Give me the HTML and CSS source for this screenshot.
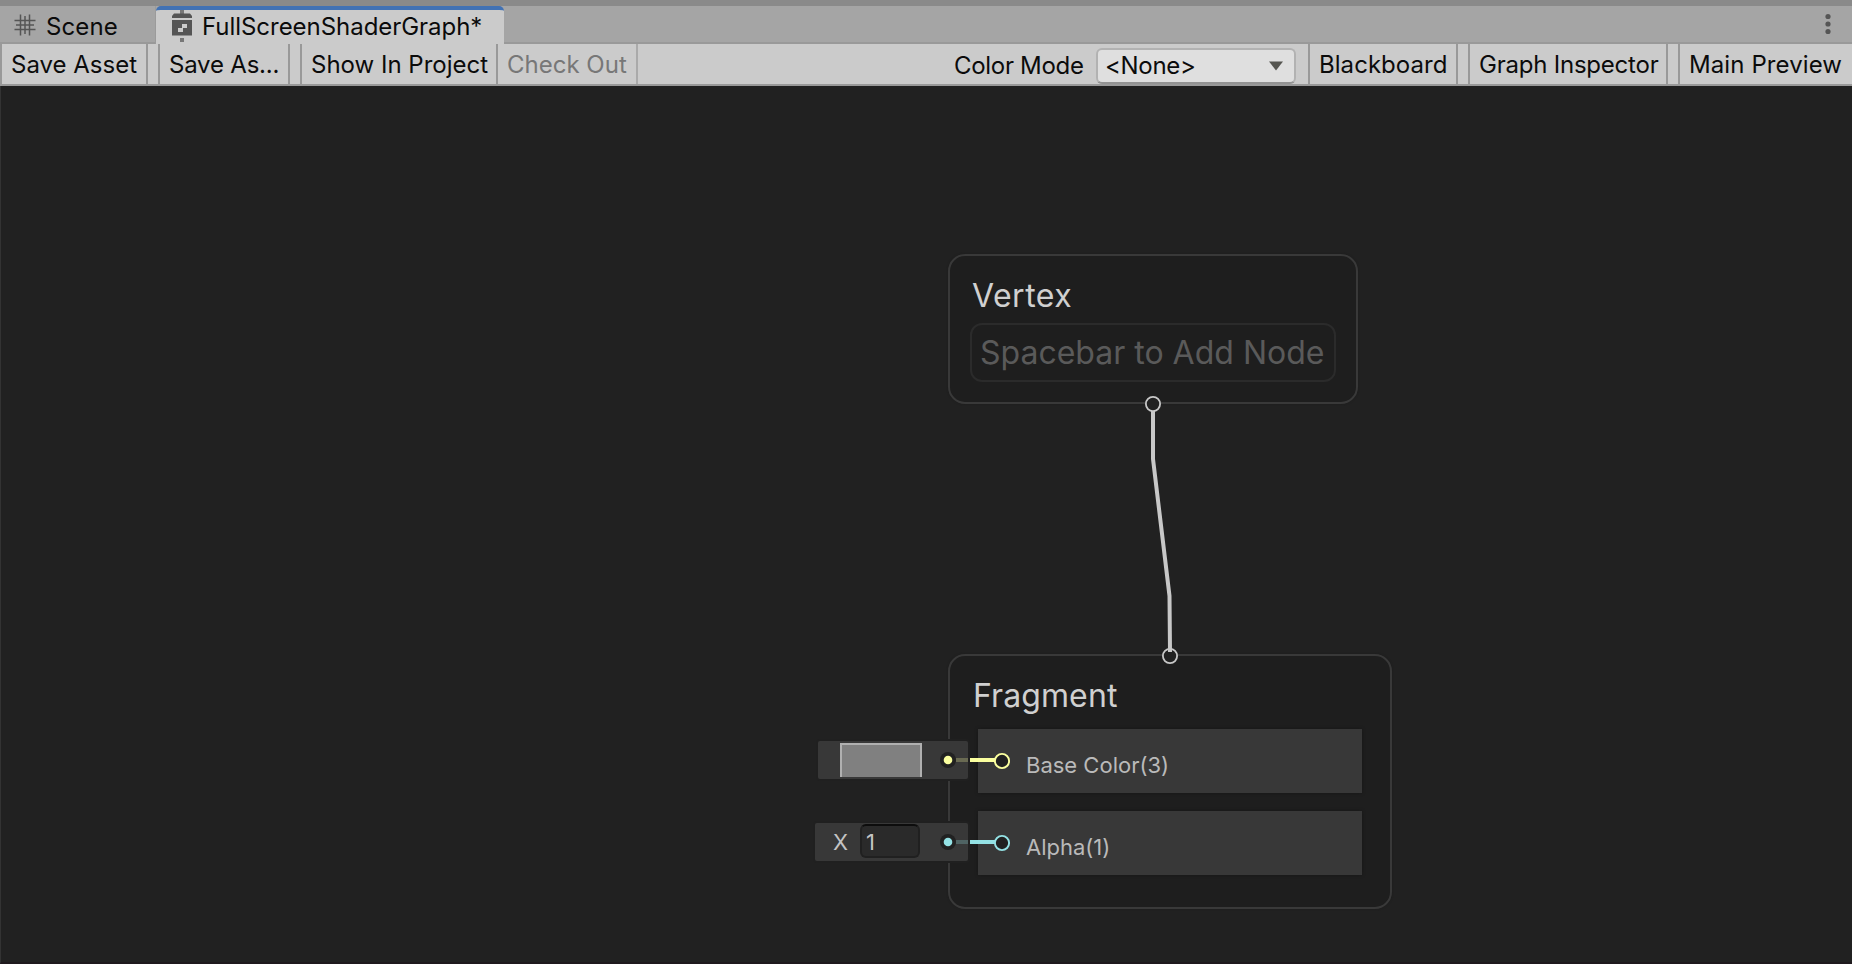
FILE: index.html
```html
<!DOCTYPE html>
<html lang="en">
<head>
<meta charset="utf-8">
<title>FullScreenShaderGraph</title>
<link rel="stylesheet" href="styles.css">
</head>
<body>
<div class="window">
  <nav class="tabs">
    <div class="tab tab-scene">
      <svg class="grid-icon" width="22" height="22" viewBox="0 0 22 22"><path d="M6.500 0.500V21.500M15.500 0.500V21.500M11 2V20M0.500 6.500H21.500M0.500 15.500H21.500M2 11H20" /></svg>
      <span class="scene-label">Scene</span>
    </div>
    <div class="tab tab-active">
      <svg class="graph-icon" width="22" height="32" viewBox="0 0 22 32">
        <path class="stem" d="M9 0h4v4H9zM9 28h4v4H9z"/>
        <path class="body" d="M3 3.500H19L21 6V8H1V6zM1 10H21V25.500H1z"/>
        <path class="check" d="M11 14h5v4h-5zM7 18h5v4H7z"/>
      </svg>
      <span class="graph-label">FullScreenShaderGraph*</span>
    </div>
    <svg class="menu-icon" width="6" height="22" viewBox="0 0 6 22"><circle cx="3" cy="3.500" r="2.600"/><circle cx="3" cy="11" r="2.600"/><circle cx="3" cy="18.500" r="2.600"/></svg>
  </nav>
  <div class="toolbar">
    <div class="tool save"><span>Save Asset</span></div>
    <div class="tool save-as"><span>Save As...</span></div>
    <div class="tool show"><span>Show In Project</span></div>
    <div class="tool checkout"><span>Check Out</span></div>
    <div class="mode-label">Color Mode</div>
    <div class="dropdown"><span>&lt;None&gt;</span><svg width="16" height="10" viewBox="0 0 16 10"><path d="M1 .5H15L8 9.500z"/></svg></div>
    <div class="tool blackboard"><span>Blackboard</span></div>
    <div class="tool inspector"><span>Graph Inspector</span></div>
    <div class="tool preview"><span>Main Preview</span></div>
  </div>
  <main class="canvas">
    <section class="node vertex">
      <h2>Vertex</h2>
      <div class="placeholder"><span>Spacebar to Add Node</span></div>
    </section>
    <section class="node fragment">
      <h2>Fragment</h2>
      <div class="slot"><span class="base">Base Color(3)</span></div>
      <div class="slot"><span class="alpha">Alpha(1)</span></div>
    </section>
    <div class="control color-control"><div class="swatch"></div></div>
    <div class="control value-control"><span class="axis">X</span><div class="field">1</div></div>
    <svg class="wires" width="1852" height="878" viewBox="0 86 1852 878">
      <circle class="port" cx="1153" cy="404" r="7.100"/>
      <circle class="port" cx="1170" cy="656" r="7.100"/>
      <path class="edge" d="M1153 411V459L1169.500 596L1170 652"/>
      <g class="yellow">
        <path class="dim" d="M956 760H968"/><path class="link" d="M970 760H995"/>
        <circle class="socket" cx="948" cy="760" r="8"/><circle class="dot" cx="948" cy="760" r="4.300"/>
        <circle class="ring" cx="1002" cy="761" r="7.100"/>
      </g>
      <g class="cyan">
        <path class="dim" d="M956 842H968"/><path class="link" d="M970 842H995"/>
        <circle class="socket" cx="948" cy="842" r="8"/><circle class="dot" cx="948" cy="842" r="4.300"/>
        <circle class="ring" cx="1002" cy="843" r="7.100"/>
      </g>
    </svg>
  </main>
</div>
</body>
</html>
```
FILE: styles.css
```css
* { box-sizing: border-box; }
body { margin: 0; font-family: Inter, "Liberation Sans", sans-serif; font-size: 24px; color: #0b0b0b; background: #212121; }
.window { width: 1852px; height: 964px; display: flex; flex-direction: column; overflow: hidden; white-space: nowrap; }
.tabs { height: 44px; border-top: 6px solid #8a8a8a; background: #a5a5a5; display: flex; flex: none; box-shadow: inset 0 -2px #999; }
.tab { display: flex; height: 38px; }
.tab-scene { width: 156px; padding-left: 14px; border-radius: 6px 0 0; border-right: 1px solid #9b9b9b; }
.grid-icon { margin-top: 8px; fill: none; stroke: #555; stroke-width: 1.500px; }
.scene-label { margin-left: 10px; line-height: 41px; letter-spacing: .1px; }
.tab-active { width: 348px; padding-left: 15px; background: #cbcbcb; border-top: 4px solid #4272b4; border-radius: 5px 5px 0 0; }
.graph-icon { flex: none; }
.stem { fill: #777; }
.body { fill: #555; }
.check { fill: #cbcbcb; }
.graph-label { margin-left: 9px; line-height: 33px; letter-spacing: -.04px; }
.menu-icon { margin: 7px 21px 0 auto; fill: #555; }
.toolbar { height: 42px; flex: none; display: flex; background: #cbcbcb; border-bottom: 2px solid #999; }
.tool { border: solid #999; border-width: 0 2px; padding-left: 9px; line-height: 41px; margin-right: 10px; }
.save { width: 148px; }
.save-as { width: 132px; letter-spacing: -.2px; }
.show { width: 198px; margin-right: 0; }
.checkout { width: 140px; border-left: 0; border-color: #aaa; color: #777; margin-right: 316px; }
.mode-label { width: 142px; line-height: 43px; letter-spacing: -.3px; }
.dropdown { width: 200px; height: 36px; margin: 4px 12px 0 0; padding: 0 10px 0 7px; border: 2px solid #b2b2b2; border-bottom-color: #939393; border-radius: 6px; background: #dfdfdf; display: flex; align-items: center; justify-content: space-between; line-height: 32px; letter-spacing: -.3px; }
.dropdown svg { fill: #555550; }
.blackboard { width: 150px; letter-spacing: .05px; }
.inspector { width: 200px; letter-spacing: -.22px; }
.preview { width: 174px; margin-right: 0; border-right: 0; letter-spacing: .1px; }
.canvas { position: relative; flex: 1; background: #212121; border-left: 1px solid #333; border-bottom: 2px solid #1f191d; }
.node { position: absolute; left: 947px; border: 2px solid #393939; border-radius: 17px; background: #1e1e1e; color: #d0d0d0; box-shadow: 0 0 2px #1b1b1b; }
.vertex { top: 168px; width: 410px; height: 150px; padding: 20px 20px; }
.fragment { top: 568px; width: 444px; height: 255px; padding: 20px 28px; }
h2 { margin: 0 0 7px 2px; font-size: 32px; font-weight: 400; line-height: 40px; letter-spacing: .5px; }
.fragment h2 { margin: 0 0 13px -5px; letter-spacing: .1px; }
.placeholder { height: 59px; border: 2px solid #2b2b2b; border-radius: 12px; color: #5a5a5a; font-size: 32px; line-height: 56px; padding-left: 8px; letter-spacing: 0; }
.slot { height: 64px; width: 384px; margin-bottom: 18px; padding-left: 48px; background: #383838; color: #bababa; font-size: 22px; line-height: 73px; box-shadow: 0 0 3px #171717; }
.control { position: absolute; height: 38px; background: #383838; border-radius: 2px; box-shadow: 0 0 0 2px #202020; display: flex; }
.color-control { left: 817px; top: 655px; width: 150px; padding: 2px 0 0 22px; }
.swatch { width: 82px; height: 34px; background: #808080; border: 2px solid #b0b0b0; border-bottom: 0; }
.value-control { left: 814px; top: 737px; width: 153px; padding: 1px 0 0 18px; color: #c4c4c4; font-size: 22px; line-height: 37px; }
.axis { width: 27px; }
.field { width: 60px; height: 34px; border: 2px solid #202020; border-top-color: #0d0d0d; border-radius: 6px; background: #2a2a2a; line-height: 33px; padding-left: 4px; }
.wires { position: absolute; left: -1px; top: 0; fill: none; }
.port { fill: #212121; stroke: #c8c8c8; stroke-width: 1.800px; }
.edge { stroke: #c8c8c8; stroke-width: 4px; }
.yellow { color: #fbff9f; }
.cyan { color: #94e2e5; }
.dim { stroke: currentColor; stroke-width: 4px; opacity: .25; }
.link { stroke: currentColor; stroke-width: 4px; }
.socket { fill: #212121; }
.dot { fill: currentColor; }
.ring { fill: #212121; stroke: currentColor; stroke-width: 1.900px; }
```
